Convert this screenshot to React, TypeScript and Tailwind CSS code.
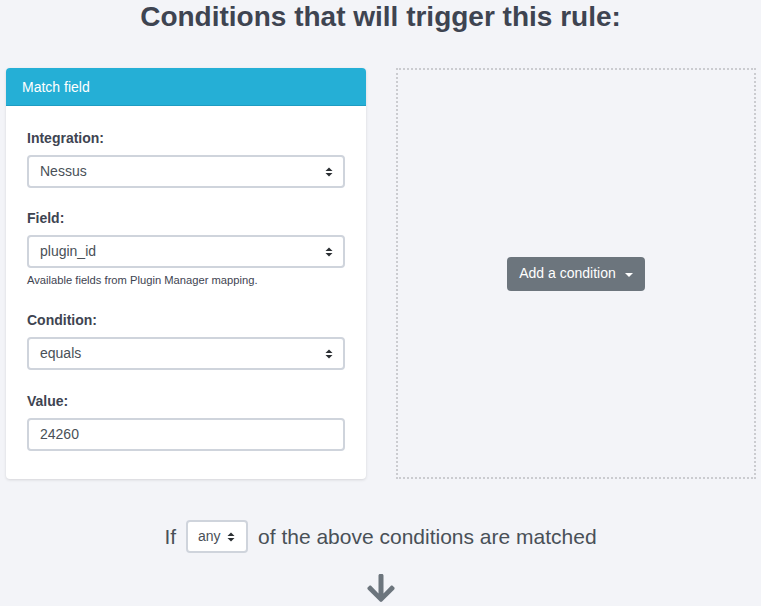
import type { ReactNode } from "react";
import { FaArrowDown } from "react-icons/fa";

function SortArrows() {
  return (
    <svg width="8" height="10" viewBox="0 0 8 10" className="shrink-0">
      <path d="M0.5 4 L4 0.5 L7.5 4 Z" fill="#2b2f33" />
      <path d="M0.5 6 L4 9.5 L7.5 6 Z" fill="#2b2f33" />
    </svg>
  );
}

function FakeSelect({ value }: { value: string }) {
  return (
    <div className="h-[33px] w-full flex items-center justify-between bg-white border-2 border-[#cfd4dc] rounded-[4px] pl-[11px] pr-[10px] text-[14px] text-[#495057]">
      <span>{value}</span>
      <SortArrows />
    </div>
  );
}

function FieldGroup({
  label,
  className = "",
  children,
}: {
  label: string;
  className?: string;
  children: ReactNode;
}) {
  return (
    <div className={className}>
      <label className="block text-[14px] leading-[21px] font-bold text-[#3e4451] mb-[6px]">
        {label}
      </label>
      {children}
    </div>
  );
}

export default function App() {
  return (
    <div className="h-[606px] overflow-hidden bg-[#f3f4f8] font-['Liberation_Sans',Arial,sans-serif]">
      <h2 className="text-center text-[28px] leading-[34px] font-bold text-[#3e4451]">
        Conditions that will trigger this rule:
      </h2>

      <div className="mt-[34px] pl-[6px] grid grid-cols-[360px_360px] gap-[30px]">
        <div className="bg-white rounded-[4px] shadow-[0_1px_3px_rgba(0,0,0,0.13)] overflow-hidden">
          <div className="h-[38px] flex items-center pt-[1px] px-4 bg-[#25afd6] border-b border-[#1e9cc2] text-[14px] text-white">
            Match field
          </div>
          <div className="px-[21px] pt-[22px] pb-[28px]">
            <FieldGroup label="Integration:">
              <FakeSelect value="Nessus" />
            </FieldGroup>

            <FieldGroup label="Field:" className="mt-[20px]">
              <FakeSelect value="plugin_id" />
              <p className="mt-[4px] text-[11.2px] leading-[17px] text-[#3e4451]">
                Available fields from Plugin Manager mapping.
              </p>
            </FieldGroup>

            <FieldGroup label="Condition:" className="mt-[21px]">
              <FakeSelect value="equals" />
            </FieldGroup>

            <FieldGroup label="Value:" className="mt-[21px]">
              <div className="h-[33px] w-full flex items-center bg-white border-2 border-[#cfd4dc] rounded-[4px] pl-[11px] text-[14px] text-[#495057]">
                24260
              </div>
            </FieldGroup>
          </div>
        </div>

        <div className="border-2 border-dotted border-[#cbccd0] flex items-center justify-center">
          <button
            type="button"
            className="h-[34px] flex items-center px-[12px] rounded-[4px] bg-[#6c757d] text-white text-[14px]"
          >
            Add a condition
            <span className="ml-[9px] mt-[2px] w-0 h-0 border-l-[4px] border-r-[4px] border-t-[4px] border-l-transparent border-r-transparent border-t-white" />
          </button>
        </div>
      </div>

      <div className="mt-[41px] flex items-center justify-center gap-[10px] text-[21px] text-[#495057]">
        <span>If</span>
        <div className="h-[33px] w-[62px] flex items-center bg-white border-2 border-[#cfd4dc] rounded-[4px] pl-[10px] gap-[6px] text-[14px] text-[#495057]">
          <span>any</span>
          <SortArrows />
        </div>
        <span>of the above conditions are matched</span>
      </div>

      <div className="mt-[19px] flex justify-center text-[#6c757d]">
        <FaArrowDown size={32} />
      </div>
    </div>
  );
}
